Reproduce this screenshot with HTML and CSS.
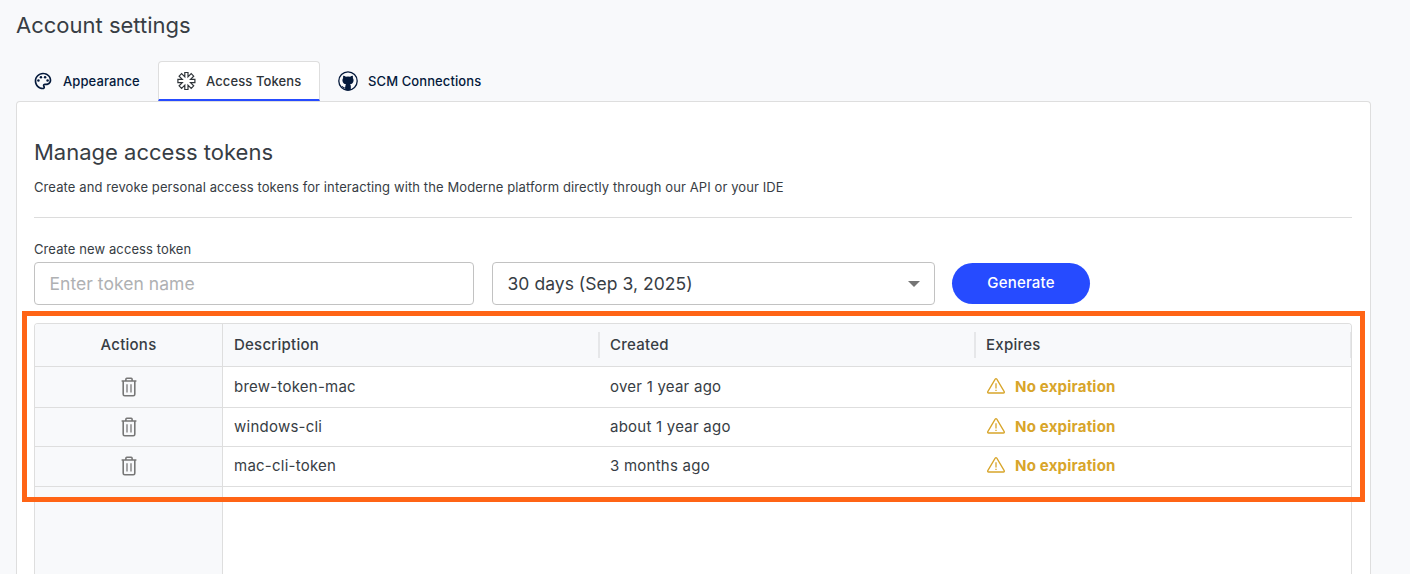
FILE: index.html
```html
<!DOCTYPE html>
<html lang="en">
<head>
<meta charset="utf-8">
<title>Account settings</title>
<link rel="stylesheet" href="styles.css">
</head>
<body>
<svg class="sprite" aria-hidden="true">
  <symbol id="trash" viewBox="0 0 16 20">
    <g fill="none" stroke="currentColor" stroke-width="1.6">
      <path d="M.6 4h14.8M4.9 3.6V2.2Q4.9 1.3 5.8 1.3h4.4q.9 0 .9.9v1.4M2.2 4v13.2q0 1.5 1.5 1.5h8.6q1.5 0 1.5-1.5V4"/>
      <path d="M6 7.2v8.4M10 7.2v8.4" stroke-width="1.3"/>
    </g>
  </symbol>
  <symbol id="warning" viewBox="0 0 18 16">
    <g fill="none" stroke="currentColor" stroke-width="1.3" stroke-linejoin="round">
      <path d="M8.2 1.2Q9 .2 9.8 1.2L17.2 13.6Q17.7 14.9 16.4 15H1.6Q.3 14.9.8 13.6Z"/>
      <path d="M9 5.2v5.3M9 11.7v1.4"/>
    </g>
  </symbol>
</svg>
<main class="page">
  <h1 class="page-title">Account settings</h1>
  <nav class="tabs">
    <a class="tab tab-first">
      <svg class="tab-icon" viewBox="0 0 24 24"><path fill="currentColor" d="M12 22C6.49 22 2 17.51 2 12S6.49 2 12 2s10 4.04 10 9c0 3.31-2.69 6-6 6h-1.77c-.28 0-.5.22-.5.5 0 .12.05.23.13.33.41.47.64 1.06.64 1.67 0 1.38-1.12 2.5-2.5 2.5m0-18c-4.41 0-8 3.59-8 8s3.59 8 8 8c.28 0 .5-.22.5-.5 0-.16-.08-.28-.14-.35-.41-.46-.63-1.05-.63-1.65 0-1.38 1.12-2.5 2.5-2.5H16c2.21 0 4-1.79 4-4 0-3.86-3.59-7-8-7"/><g fill="currentColor"><circle cx="6.5" cy="11.5" r="1.5"/><circle cx="9.5" cy="7.5" r="1.5"/><circle cx="14.5" cy="7.5" r="1.5"/><circle cx="17.5" cy="11.5" r="1.5"/></g></svg>
      <span>Appearance</span>
    </a>
    <a class="tab tab-active">
      <svg class="tab-icon" viewBox="-10.4 -10 20 20"><path fill="none" stroke="currentColor" stroke-width="1.2" stroke-linejoin="miter" d="M-1.6-4.1V-8.5H1.6V-4.1L4.8-7.3 7.3-4.8 4.1-1.6H8.5V1.6H4.1L7.3 4.8 4.8 7.3 1.6 4.1V8.5H-1.6V4.1L-4.8 7.3-7.3 4.8-4.1 1.6H-8.5V-1.6H-4.1L-7.3-4.8-4.8-7.3Z"/></svg>
      <span>Access Tokens</span>
    </a>
    <a class="tab">
      <svg class="tab-icon" viewBox="0 0 20 20"><circle cx="10" cy="10" r="9.2" fill="none" stroke="currentColor" stroke-width="1.3"/><path fill="currentColor" d="M5.3 4.7Q6.5 4.6 7.9 5.7 10 5.3 12.1 5.7 13.5 4.6 14.7 4.7q.5 1.3.1 2.4 1 1.2.7 2.9-.4 2.9-3.5 3.3.8.7.8 1.7v4.2q-2.8.9-5.6 0v-1.8q-2.1.3-2.9-1.4L3.5 15q1.3-.3 2 .9.7.8 1.7.3.1-1.9.8-2.9-3.1-.4-3.5-3.3-.3-1.7.7-2.9-.4-1.1.1-2.4Z"/></svg>
      <span>SCM Connections</span>
    </a>
  </nav>
  <section class="panel">
    <h2 class="section-title">Manage access tokens</h2>
    <p class="intro">Create and revoke personal access tokens for interacting with the Moderne platform directly through our API or your IDE</p>
    <label class="field-label" for="token-name">Create new access token</label>
    <div class="form">
      <input class="field" id="token-name" placeholder="Enter token name">
      <div class="field select"><span>30 days (Sep 3, 2025)</span><svg class="caret" viewBox="0 0 12 6"><path fill="currentColor" d="M0 0h12L6 6z"/></svg></div>
      <button class="generate">Generate</button>
    </div>
    <div class="grid-wrap">
      <div class="grid">
        <div class="row head">
          <div class="cell action">Actions</div>
          <div class="cell sep">Description</div>
          <div class="cell sep">Created</div>
          <div class="cell sep">Expires</div>
        </div>
        <div class="row first">
          <div class="cell action"><svg class="trash"><use href="#trash"/></svg></div>
          <div class="cell">brew-token-mac</div>
          <div class="cell">over 1 year ago</div>
          <div class="cell expiry"><svg class="warning"><use href="#warning"/></svg><span>No expiration</span></div>
        </div>
        <div class="row second">
          <div class="cell action"><svg class="trash"><use href="#trash"/></svg></div>
          <div class="cell">windows-cli</div>
          <div class="cell">about 1 year ago</div>
          <div class="cell expiry"><svg class="warning"><use href="#warning"/></svg><span>No expiration</span></div>
        </div>
        <div class="row third">
          <div class="cell action"><svg class="trash"><use href="#trash"/></svg></div>
          <div class="cell">mac-cli-token</div>
          <div class="cell">3 months ago</div>
          <div class="cell expiry"><svg class="warning"><use href="#warning"/></svg><span>No expiration</span></div>
        </div>
        <div class="row filler"><div class="cell action"></div></div>
      </div>
      <div class="highlight"></div>
    </div>
  </section>
</main>
</body>
</html>
```
FILE: styles.css
```css
* { box-sizing: border-box; }
body {
  margin: 0;
  background: #f8f9fb;
  color: #373d44;
  font-family: Inter, "Liberation Sans", sans-serif;
  font-size: 15px;
}
.sprite { display: none; }
.page {
  display: flex;
  flex-direction: column;
  height: 574px;
  overflow: hidden;
  padding: 0 39px 0 16px;
}
.page-title, .section-title {
  margin: 0;
  font-size: 22px;
  font-weight: 400;
  line-height: 30px;
}
.page-title { flex: none; padding-top: 10px; height: 61px; }
.tabs { display: flex; flex: none; height: 40px; }
.tab {
  display: flex;
  align-items: center;
  gap: 10px;
  padding: 0 18px;
  color: #04193b;
  font-size: 13px;
  font-weight: 500;
  letter-spacing: .1px;
}
.tab-first { width: 142px; padding: 0 0 0 17px; }
.tab-active {
  width: 162px;
  color: #2f3439;
  background: #fff;
  border: 1px solid #dedede;
  border-bottom: 2px solid #264bff;
  border-radius: 4px 4px 0 0;
  padding: 1px 17px 0;
}
.tab-icon { width: 20px; height: 20px; flex: none; }
.panel {
  display: flex;
  flex-direction: column;
  flex: 1;
  min-height: 0;
  padding: 35px 18px 0 17px;
  border: 1px solid #dedede;
  border-bottom: 0;
  border-radius: 4px 4px 0 0;
  background: #fff;
}
.intro {
  margin: 0 0 22px;
  padding: 11px 0 20px;
  border-bottom: 1px solid #dcdcdc;
  font-size: 13px;
  line-height: 19px;
  letter-spacing: .1px;
}
.field-label {
  display: block;
  font-size: 13px;
  line-height: 18px;
  letter-spacing: .1px;
  margin-bottom: 4px;
}
.form { display: flex; align-items: center; }
.field {
  width: 440px;
  height: 43px;
  margin: 0 18px 0 0;
  padding: 0 15px 0 14.5px;
  border: 1px solid #c2c2c2;
  border-radius: 4px;
  background: #fff;
  color: #373d44;
  font: 400 17.5px Inter, sans-serif;
  letter-spacing: .04px;
}
.field::placeholder { color: #afb1b3; opacity: 1; }
.select {
  display: flex;
  align-items: center;
  justify-content: space-between;
  width: 443px;
  margin-right: 17px;
  padding-right: 14px;
}
.caret { width: 12px; height: 6px; color: #757575; }
.generate {
  width: 138px;
  height: 41px;
  padding: 0 0 3px;
  border: 0;
  border-radius: 21px;
  background: #264bff;
  color: #fff;
  font: 500 15px Inter, sans-serif;
  letter-spacing: .2px;
}
.grid-wrap {
  display: flex;
  flex: 1;
  min-height: 0;
  position: relative;
  margin-top: 18px;
}
.grid {
  display: flex;
  flex-direction: column;
  flex: 1;
  border: 1px solid #dedede;
  border-bottom: 0;
  border-radius: 4px 4px 0 0;
  overflow: hidden;
}
.row {
  display: grid;
  grid-template-columns: 188px 376px 376px 1fr;
  border-bottom: 1px solid #dedede;
}
.cell {
  display: flex;
  align-items: center;
  position: relative;
  padding: 0 0 2px 11px;
  letter-spacing: .24px;
}
.action {
  justify-content: center;
  padding: 0;
  background: #f8f9fb;
  border-right: 1px solid #dedede;
}
.head { height: 43px; background: #f8f9fb; font-weight: 500; }
.head .action { padding-bottom: 2px; }
.sep::after {
  content: "";
  position: absolute;
  right: -1px;
  top: 8px;
  width: 2px;
  height: 26px;
  background: #e6e7e9;
}
.first { height: 41px; }
.second { height: 39px; }
.third { height: 40px; }
.third .action { padding-bottom: 1px; }
.filler { flex: 1; border-bottom: 0; }
.trash { width: 16px; height: 20px; color: #777; }
.expiry {
  gap: 10px;
  padding-left: 12px;
  color: #d8a52a;
  font-weight: 700;
  letter-spacing: .22px;
}
.warning { width: 18px; height: 16px; margin-top: -1px; }
.highlight {
  position: absolute;
  top: -12px;
  left: -12px;
  right: -13px;
  height: 191px;
  border: 5px solid #ff6415;
}
```
